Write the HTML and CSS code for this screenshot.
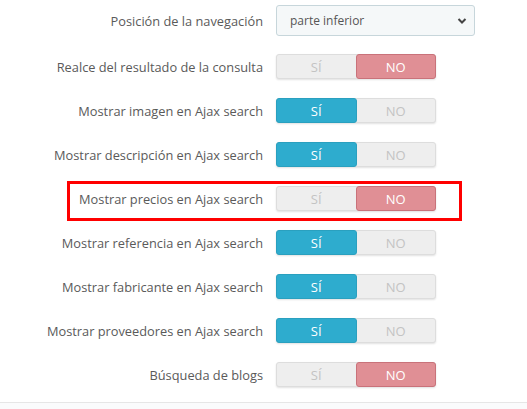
FILE: index.html
```html
<!DOCTYPE html>
<html lang="es">
<head>
<meta charset="utf-8">
<link rel="stylesheet" href="styles.css">
</head>
<body>
<div class="page">
  <form class="form">
    <div class="row row-select">
      <label class="label">Posición de la navegación</label>
      <div class="select">
        <span>parte inferior</span>
        <svg class="chev" width="10" height="8" viewBox="0 0 10 8"><path d="M1.5 2 L5 5.5 L8.5 2" fill="none" stroke="#444" stroke-width="2"/></svg>
      </div>
    </div>
    <div class="row">
      <label class="label">Realce del resultado de la consulta</label>
      <div class="switch"><span class="opt">SÍ</span><span class="opt no on">NO</span></div>
    </div>
    <div class="row">
      <label class="label">Mostrar imagen en Ajax search</label>
      <div class="switch"><span class="opt yes on">SÍ</span><span class="opt">NO</span></div>
    </div>
    <div class="row">
      <label class="label">Mostrar descripción en Ajax search</label>
      <div class="switch"><span class="opt yes on">SÍ</span><span class="opt">NO</span></div>
    </div>
    <div class="row highlighted">
      <label class="label">Mostrar precios en Ajax search</label>
      <div class="switch"><span class="opt">SÍ</span><span class="opt no on">NO</span></div>
      <div class="mark"></div>
    </div>
    <div class="row">
      <label class="label">Mostrar referencia en Ajax search</label>
      <div class="switch"><span class="opt yes on">SÍ</span><span class="opt">NO</span></div>
    </div>
    <div class="row">
      <label class="label">Mostrar fabricante en Ajax search</label>
      <div class="switch"><span class="opt yes on">SÍ</span><span class="opt">NO</span></div>
    </div>
    <div class="row">
      <label class="label">Mostrar proveedores en Ajax search</label>
      <div class="switch"><span class="opt yes on">SÍ</span><span class="opt">NO</span></div>
    </div>
    <div class="row">
      <label class="label">Búsqueda de blogs</label>
      <div class="switch"><span class="opt">SÍ</span><span class="opt no on">NO</span></div>
    </div>
  </form>
  <div class="footer"></div>
</div>
</body>
</html>
```

FILE: styles.css
```css
html, body {
  margin: 0;
  padding: 0;
  background: #fff;
}
body {
  font-family: "Open Sans", "Liberation Sans", sans-serif;
  font-size: 12.8px;
  color: #555;
}
.page {
  width: 527px;
  height: 409px;
  overflow: hidden;
}
.form {
  padding-top: 5px;
  height: 397px;
  box-sizing: border-box;
  display: flex;
  flex-direction: column;
  gap: 19px;
}
.row {
  position: relative;
  display: grid;
  grid-template-columns: 263px auto;
  column-gap: 13px;
  align-items: center;
  height: 25px;
}
.row-select {
  height: 31px;
  margin-bottom: -1px;
}
.label {
  text-align: right;
  white-space: nowrap;
  color: #5a5a5a;
}
.select {
  box-sizing: border-box;
  width: 199px;
  height: 31px;
  border: 1px solid #c7d6db;
  border-radius: 3px;
  background: #f5f8f9;
  display: flex;
  align-items: center;
  justify-content: space-between;
  padding: 0 7px 0 13px;
  font-size: 12px;
  color: #555;
}
.chev {
  display: block;
}
.switch {
  box-sizing: border-box;
  width: 160px;
  height: 25px;
  display: flex;
  border-radius: 3px;
  background: #eee;
  border: 1px solid #ddd;
  box-shadow: 0 1px 2px rgba(0,0,0,0.12);
}
.opt {
  flex: 1;
  display: flex;
  align-items: center;
  justify-content: center;
  font-size: 13px;
  color: #c3c3c3;
  border-radius: 3px;
}
.opt.on {
  color: #fff;
}
.opt.yes.on {
  background: #2eacce;
  margin: -1px 0 -1px -1px;
  border: 1px solid #2aa0bf;
}
.opt.no.on {
  background: #e08f95;
  margin: -1px -1px -1px 0;
  border: 1px solid #c9727a;
}
.mark {
  position: absolute;
  left: 67px;
  top: -5px;
  width: 395px;
  height: 40px;
  box-sizing: border-box;
  border: 3px solid #ff0000;
  pointer-events: none;
}
.footer {
  height: 12px;
  border-top: 1px solid #e6e6e6;
  background: #fafbfc;
  margin-top: 5px;
}
```
